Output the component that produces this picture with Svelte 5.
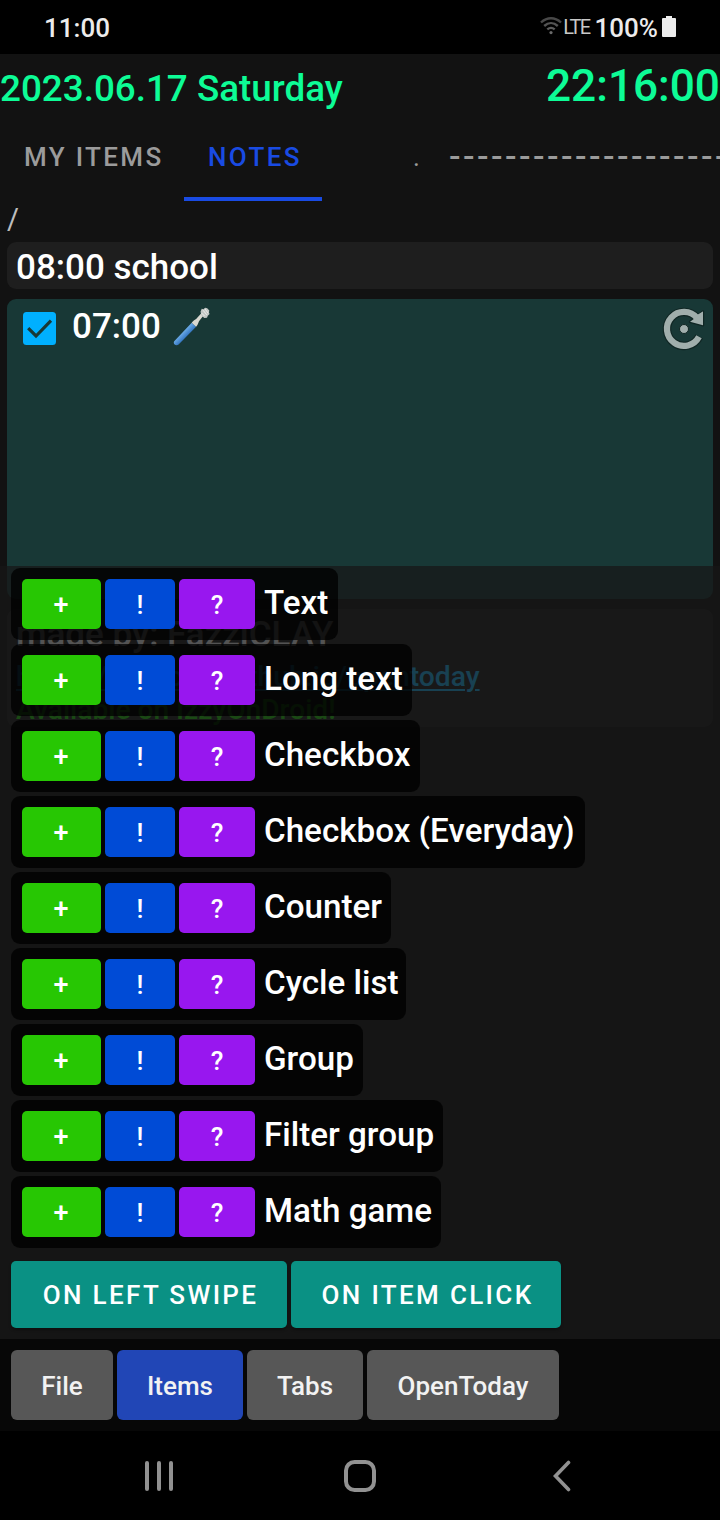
<script>
  const kinds = ['Text', 'Long text', 'Checkbox', 'Checkbox (Everyday)', 'Counter', 'Cycle list', 'Group', 'Filter group', 'Math game'];
  const widths = [327, 401, 409, 574, 380, 395, 352, 432, 430];
  const sections = [
    { name: 'File', width: 102 },
    { name: 'Items', width: 126, active: true },
    { name: 'Tabs', width: 116 },
    { name: 'OpenToday', width: 192 }
  ];
  const dashes = '-'.repeat(20);
</script>

<div class="screen">
  <header class="status">
    <span class="time">11:00</span>
    <div class="indicators">
      <svg class="wifi" width="22" height="18" viewBox="0 0 22 18" fill="none" stroke-width="2.4">
        <path d="M1 5.5C7-.2 15-.2 21 5.5" stroke="#484848" />
        <path d="M4.2 9C8.3 5.2 13.7 5.2 17.8 9" stroke="#545454" />
        <path d="M7.3 12.4c2.3-1.9 5.1-1.9 7.4 0" stroke="#5c5c5c" />
        <circle cx="11" cy="15.6" r="1.6" fill="#6a6a6a" />
      </svg>
      <span class="lte">LTE</span>
      <span class="percent">100%</span>
      <svg class="battery" width="14" height="21" viewBox="0 0 14 21">
        <path d="M4 0h6v2h3a1 1 0 0 1 1 1v17a1 1 0 0 1-1 1H1a1 1 0 0 1-1-1V3a1 1 0 0 1 1-1h3z" fill="#ececec" />
      </svg>
    </div>
  </header>

  <div class="clock">
    <span class="date">2023.06.17 Saturday</span>
    <span class="now">22:16:00</span>
  </div>

  <nav class="tabs">
    <span class="tab mine">MY ITEMS</span>
    <span class="tab active">NOTES</span>
    <span class="tab dot">.</span>
    <span class="tab dashes">{dashes}</span>
  </nav>

  <div class="path">/</div>

  <main class="content">
    <section class="card first">08:00 school</section>
    <section class="card task">
      <svg class="check" width="33" height="33" viewBox="0 0 33 33">
        <rect width="33" height="33" rx="3.5" fill="#00b0ff" />
        <path d="M5.2 16.2 13 24 28 8.6" fill="none" stroke="#183836" stroke-width="3.2" />
      </svg>
      <span class="at">07:00</span>
      <svg class="brush" width="38" height="40" viewBox="0 0 38 40">
        <defs>
          <linearGradient id="handle" x1="0" y1="0" x2="1" y2="1">
            <stop offset=".38" stop-color="#74b3ec" />
            <stop offset=".62" stop-color="#2c6fbd" />
          </linearGradient>
        </defs>
        <path d="M1.200 34.300 18.700 15.700l4.400 4L5.600 37.600c-2.600 1.900-6-.6-4.400-3.300z" fill="url(#handle)" />
        <path d="M18.700 15.700c1.400-2.200 2.800-2.600 4.400-3.800L29 5.500l2.300 2-5.300 6.700c-.9 2-1.300 3.900-2.900 5.500z" fill="#d9d8d1" />
        <path d="m27.500 4.800 1.200-3 1.800.4L32.300.7l1.900.6 2.100 2.300-.4 1.900.7 1.600-1.800 1.600-.8 2-2.700.4-2.700-2.300z" fill="#c3c7c5" />
        <path d="m30 3.200 3.800 4.600m-2-6 3.200 4.200M28.500 6l3 3" stroke="#eeeeeb" stroke-width="1" />
      </svg>
      <svg class="repeat" width="46" height="46" viewBox="0 0 46 46">
        <g fill="none" stroke="#102624">
          <path d="M36.500 11.500A17 17 0 1 0 39.200 30.500" stroke-width="8.500" />
          <path d="m43 5.500v13.700L30 15.800l4-3z" stroke-width="2.500" stroke-linejoin="round" />
        </g>
        <path d="M37 12A17 17 0 1 0 39 30.800" fill="none" stroke="#a0aeac" stroke-width="6.200" />
        <path d="M43 5.500v13.700L30 15.800l4.500-3.200z" fill="#a0aeac" />
        <path d="m43 5.500v13.700L36 9.500z" fill="#a0aeac" />
        <circle cx="24" cy="23" r="4.500" fill="#a0aeac" stroke="#102624" stroke-width="1" />
      </svg>
    </section>
    <section class="card about">
      <p class="made">made by: FazziCLAY</p>
      <p class="link">https://fazziclay.github.io/opentoday</p>
      <p class="avail">Available on IzzyOnDroid!</p>
    </section>

    <div class="panel">
      {#each kinds as kind, i}
        <div class="row" style="width: {widths[i]}px">
          <span class="btn add">+</span>
          <span class="btn quick">!</span>
          <span class="btn help">?</span>
          <span class="label">{kind}</span>
        </div>
      {/each}
      <div class="actions">
        <span class="action swipe">ON LEFT SWIPE</span>
        <span class="action click">ON ITEM CLICK</span>
      </div>
    </div>
  </main>

  <footer class="sections">
    {#each sections as s}
      <span class="section" class:active={s.active} style="width: {s.width}px">{s.name}</span>
    {/each}
  </footer>

  <div class="navbar">
    <svg width="30" height="32" viewBox="0 0 30 32" stroke="#919191" stroke-width="4" stroke-linecap="round"><path d="M3 3v26M15 3v26M27 3v26" /></svg>
    <svg width="32" height="32" viewBox="0 0 32 32" fill="none" stroke="#919191" stroke-width="4"><rect x="2" y="2" width="28" height="28" rx="8.500" /></svg>
    <svg class="back" width="18" height="32" viewBox="0 0 18 32" fill="none" stroke="#919191" stroke-width="3.600" stroke-linecap="round"><path d="M15.500 2.500 2.500 16l13 13.500" /></svg>
  </div>
</div>

<style>
  :global(body) { margin: 0; background: #000; }
  .screen { width: 720px; height: 1520px; overflow: hidden; display: flex; flex-direction: column; background: #121212; color: #fff; font-family: Roboto, sans-serif; font-weight: 500; white-space: nowrap; }
  .status { box-sizing: border-box; height: 54px; flex: none; background: #000; color: #ececec; display: flex; justify-content: space-between; align-items: center; padding: 2px 44px 0 44px; font-size: 26px; }
  .indicators { display: flex; align-items: center; }
  .wifi { margin-top: -4px; }
  .lte { font-size: 20px; font-weight: 400; color: #c8c8c8; margin: -2px 5px 0 1px; letter-spacing: -1.700px; }
  .percent { margin-right: 4px; }
  .battery { margin-top: -3px; }
  .clock { height: 70px; flex: none; display: flex; justify-content: space-between; align-items: baseline; color: #0dfc96; }
  .date { font-size: 36.800px; }
  .now { font-size: 44.200px; line-height: 64px; }
  .tabs { height: 77px; flex: none; display: flex; font-size: 26px; letter-spacing: 2.350px; color: #9b9b9b; }
  .tab { box-sizing: border-box; line-height: 66px; flex: none; }
  .mine { width: 184px; padding-left: 24px; }
  .active.tab { width: 138px; padding-left: 24px; color: #194be3; border-bottom: 4px solid #194be3; }
  .dot { width: 127px; padding-left: 91px; font-weight: 400; }
  .dashes { font-size: 34px; letter-spacing: 2.450px; line-height: 64px; font-weight: 400; letter-spacing: 4.620px; font-weight: 500; letter-spacing: 2.450px; }
  .path { height: 41px; flex: none; box-sizing: border-box; padding-left: 7px; font-size: 29px; font-weight: 400; line-height: 36px; color: #bdbdbd; }
  .content { position: relative; height: 1097px; flex: none; padding: 0 7px; display: flex; flex-direction: column; gap: 10px; }
  .card { box-sizing: border-box; border-radius: 9px; background: #1e1e1e; }
  .first { height: 47px; padding-left: 9px; font-size: 35px; line-height: 52px; }
  .task { height: 300px; background: #183836; display: flex; align-items: flex-start; padding: 0 7px 0 16px; }
  .check { margin-top: 13px; }
  .at { font-size: 35px; line-height: 56px; margin-left: 16px; }
  .brush { margin: 8px 0 0 12px; }
  .repeat { margin: 7px 0 0 auto; }
  .about { height: 118px; padding: 3px 9px; }
  .about p { margin: 0; }
  .made { font-size: 35px; line-height: 46px; }
  .link { font-size: 28.250px; line-height: 38px; color: #1cb8fa; text-decoration: underline; text-decoration-thickness: 1.500px; text-underline-offset: 3px; }
  .avail { font-size: 28.150px; line-height: 28px; color: #24d70f; }
  .panel { position: absolute; left: 0; right: 0; top: 324px; height: 773px; box-sizing: border-box; padding: 2px 11px 0; background: rgba(23, 23, 23, .74); display: flex; flex-direction: column; gap: 4px; }
  .row { box-sizing: border-box; height: 72px; flex: none; border-radius: 9px; background: rgba(0, 0, 0, .77); padding-left: 11px; display: flex; align-items: center; gap: 4px; }
  .btn { height: 50px; border-radius: 5px; font-size: 26px; line-height: 52px; text-align: center; }
  .add { box-sizing: border-box; width: 79px; padding-right: 1px; background: #27c703; font-size: 27px; }
  .quick { width: 70px; background: #004bd6; }
  .help { width: 76px; background: #9817ef; }
  .label { font-size: 33.200px; line-height: 40px; margin: -2px 0 0 5px; }
  .actions { display: flex; gap: 4px; margin-top: 9px; }
  .action { box-sizing: border-box; padding-left: 3px; height: 67px; border-radius: 5px; background: #0a9184; font-size: 26px; line-height: 68px; letter-spacing: 2.350px; text-align: center; box-shadow: 0 2px 3px rgba(0, 0, 0, .3); }
  .swipe { width: 276px; }
  .click { width: 270px; }
  .sections { height: 92px; flex: none; box-sizing: border-box; padding: 11px; display: flex; gap: 4px; background: #070707; }
  .section { height: 70px; border-radius: 6px; background: #575757; color: #f2f2f2; font-size: 26px; line-height: 72px; text-align: center; }
  .section.active { background: #2146b6; }
  .navbar { height: 89px; box-sizing: border-box; flex: none; background: #000; display: flex; align-items: center; gap: 170px; padding: 1px 0 0 144px; }
  .back { margin-left: 7px; }
</style>
